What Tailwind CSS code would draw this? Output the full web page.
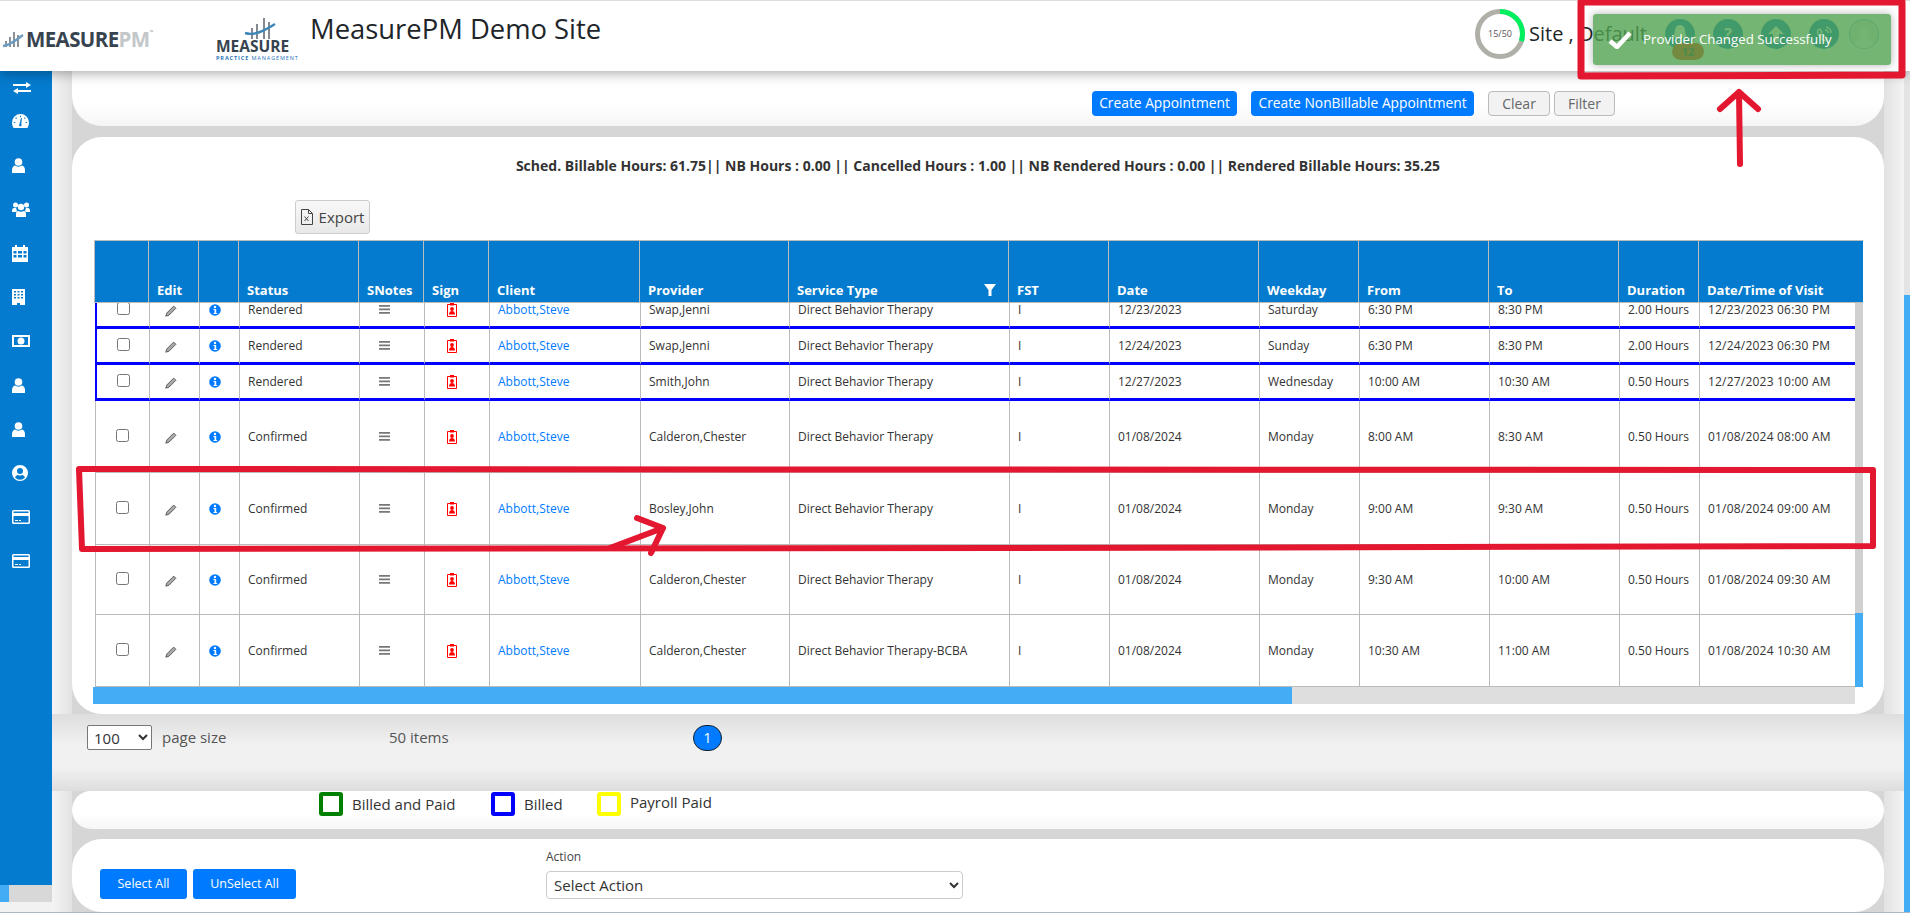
<!DOCTYPE html>
<html lang="en">

<head>
  <meta charset="UTF-8">
  <title>MeasurePM Demo Site</title>
  <script src="https://cdn.jsdelivr.net/npm/@tailwindcss/browser@4"></script>
</head>

<body class="bg-[#f2f2f2] font-['Open_Sans',sans-serif] text-[#333]">
  <div class="relative w-[1910px] h-[913px] overflow-hidden">

    <!-- Top bar -->
    <header class="relative z-10 h-[71px] border-t border-[#ddd] bg-white shadow-[0_2px_12px_rgba(0,0,0,0.35)] flex items-start">
      <div class="flex items-center w-[216px] pl-[3px] pt-[26px]">
        <svg width="21" height="20" viewBox="0 0 21 20" fill="none">
          <path d="M3 12v6M7 8v10M11 3v15M15 6v12" stroke="#59636c" stroke-width="1.4" />
          <path d="M0 17C6 17 13 11 20 6" stroke="#6d9cc0" stroke-width="2.4" />
        </svg>
        <span class="ml-[2px] text-[20.5px] leading-[24px] font-bold tracking-[-0.6px] text-[#37434f]">MEASURE<span class="text-[#c3c7ca]">PM</span><span class="align-top text-[5px] leading-[10px] tracking-normal text-[#999]">™</span></span>
      </div>
      <div class="w-[94px] pt-[17px] flex flex-col">
        <svg class="ml-[28px]" width="32" height="22" viewBox="0 0 32 22" fill="none">
          <path d="M8 10v11M13 6v15M20 0v21M25 4v17" stroke="#59636c" stroke-width="1.5" />
          <path d="M1 15C10 18 20 13 31 6" stroke="#3f86b8" stroke-width="2.4" />
        </svg>
        <span class="text-[15.5px] leading-[13px] font-bold text-[#37434f]">MEASURE</span>
        <span class="mt-[2px] text-[5.5px] leading-[7px] tracking-[0.9px] whitespace-nowrap font-bold text-[#2a75bb]">PRACTICE <span class="font-normal">MANAGEMENT</span></span>
      </div>
      <h1 class="pt-[10px] text-[27.4px] leading-[36px] text-[#212529] whitespace-nowrap">MeasurePM Demo Site</h1>

      <div class="ml-auto mr-[31px] flex items-center pt-[8px]">
        <div class="relative w-[50px] h-[50px]">
          <svg width="50" height="50" viewBox="0 0 50 50" fill="none">
            <circle cx="25" cy="25" r="22.5" stroke="#b0b0a8" stroke-width="5" />
            <circle cx="25" cy="25" r="22.5" stroke="#00f060" stroke-width="5" stroke-dasharray="42.4 141.4" transform="rotate(-90 25 25)" />
          </svg>
          <span class="absolute inset-0 flex items-center justify-center text-[9px] text-[#555]">15/50</span>
        </div>
        <span class="ml-[4px] w-[136px] text-[20px] leading-[28px] text-[#212529] whitespace-nowrap">Site , Default</span>
        <div class="relative w-[30px] h-[30px] rounded-full bg-[#047bce] flex items-center justify-center">
          <svg width="16" height="18" viewBox="0 0 16 18" fill="#fff"><path d="M8 0a5 5 0 0 0-5 5c0 5-2 6-3 8h16c-1-2-3-3-3-8a5 5 0 0 0-5-5zM6 15h4a2 2 0 0 1-4 0z" /></svg>
          <span class="absolute left-[7px] top-[24px] w-[32px] h-[17px] rounded-full bg-[#ff2a00] text-center text-[11px] leading-[17px] font-bold text-[#333]">12</span>
        </div>
        <div class="ml-[18px] w-[30px] h-[30px] rounded-full bg-[#047bce] flex items-center justify-center text-[16px] font-bold text-white">?</div>
        <div class="ml-[18px] w-[30px] h-[30px] rounded-full bg-[#047bce] flex items-center justify-center">
          <svg width="18" height="18" viewBox="0 0 18 18" fill="#fff"><path d="M9 1l8 8h-5v8H6V9H1z" /></svg>
        </div>
        <div class="ml-[18px] w-[30px] h-[30px] rounded-full bg-[#047bce] flex items-center justify-center">
          <svg width="18" height="18" viewBox="0 0 18 18" fill="none" stroke="#fff" stroke-width="1.5"><path d="M3 5c-2 3 3 10 7 11l2-3-3-2-1 1c-1-1-2-2-2-4l1-1-2-3zM10 5a3 3 0 0 1 3 3M11 2a6 6 0 0 1 5 6" /></svg>
        </div>
        <div class="ml-[10px] w-[30px] h-[30px] rounded-full border border-[#047bce]/40 bg-[#e8e8e8] flex items-end justify-center overflow-hidden">
          <svg width="22" height="24" viewBox="0 0 22 24" fill="#fff"><path d="M11 3a5 5 0 0 1 5 6c0 3-2 5-2 6l6 3c2 1 2 3 2 6H0c0-3 0-5 2-6l6-3c0-1-2-3-2-6a5 5 0 0 1 5-6z" /></svg>
        </div>
      </div>
    </header>

    <div class="flex h-[841px]">

      <!-- Side menu -->
      <div class="w-[52px] shrink-0">
        <nav class="h-[814px] bg-[#047bce] pt-[6px]">
          <div class="h-[22px] pl-[13px] flex items-center">
            <svg width="18" height="12" viewBox="0 0 18 12" fill="#fff"><path d="M0 2h13V0l5 3-5 3V4H0zM18 8H5V6l-5 3 5 3v-2h13z" /></svg>
          </div>
          <div class="h-[44px] pl-[12px] flex items-center">
            <svg width="17" height="14" viewBox="0 0 17 14" fill="#fff"><path fill-rule="evenodd" d="M8.500 0A8.500 8.500 0 0 0 0 8.500c0 2 .6 3.800 1.600 5.500h13.800c1-1.700 1.600-3.500 1.600-5.500A8.500 8.500 0 0 0 8.500 0zM8 1.800h1v1.500H8zM4 3.300l1 .8-.8 1-1-.8zM13 3.300l.8 1-1 .8-.8-1zM1.800 8h1.500v1H1.800zM13.700 8h1.500v1h-1.500zM7.500 10l1.500-6 1 .3-.8 5.700a1.300 1.300 0 1 1-1.700 0z" /></svg>
          </div>
          <div class="h-[44px] pl-[12px] flex items-center">
            <svg width="13" height="15" viewBox="0 0 13 15" fill="#fff"><circle cx="6.500" cy="4" r="3.800" /><path d="M0 15v-3c0-3 2-4.500 3-4.500 2 1.500 5 1.500 7 0 1 0 3 1.500 3 4.500v3z" /></svg>
          </div>
          <div class="h-[44px] pl-[12px] flex items-center">
            <svg width="18" height="15" viewBox="0 0 18 15" fill="#fff"><circle cx="3.500" cy="3" r="2.500" /><circle cx="14.500" cy="3" r="2.500" /><circle cx="9" cy="5" r="3.200" /><path d="M0 9c0-2 1-3 2-3h2l1 3-1 1H0zM18 9c0-2-1-3-2-3h-2l-1 3 1 1h4zM4 15v-3c0-2 1-3 2-3 2 1 4 1 6 0 1 0 2 1 2 3v3z" /></svg>
          </div>
          <div class="h-[44px] pl-[12px] flex items-center">
            <svg width="16" height="17" viewBox="0 0 16 17" fill="#fff"><path fill-rule="evenodd" d="M3 0h2v2h6V0h2v2h3v15H0V2h3zM1.500 6v2.500h3V6zm4.500 0v2.500h4V6zm5.500 0v2.500h3V6zm-10 4v2.500h3V10zm4.500 0v2.500h4V10zm5.500 0v2.500h3V10z" /></svg>
          </div>
          <div class="h-[44px] pl-[12px] flex items-center">
            <svg width="13" height="16" viewBox="0 0 13 16" fill="#fff"><path fill-rule="evenodd" d="M0 0h13v16H8v-2H5v2H0zM2 2v1.500h2V2zm3.500 0v1.500h2V2zM9 2v1.500h2V2zM2 5v1.500h2V5zm3.500 0v1.500h2V5zM9 5v1.500h2V5zM2 8v1.500h2V8zm3.500 0v1.500h2V8zM9 8v1.500h2V8z" /></svg>
          </div>
          <div class="h-[44px] pl-[12px] flex items-center">
            <svg width="18" height="12" viewBox="0 0 18 12" fill="#fff"><path fill-rule="evenodd" d="M0 0h18v12H0zm2 2v8h14V2zm7 .5a3.500 3.500 0 1 1 0 7 3.500 3.500 0 0 1 0-7z" /></svg>
          </div>
          <div class="h-[44px] pl-[12px] flex items-center">
            <svg width="13" height="15" viewBox="0 0 13 15" fill="#fff"><circle cx="6.500" cy="4" r="3.800" /><path d="M0 15v-3c0-3 2-4.500 3-4.500 2 1.500 5 1.500 7 0 1 0 3 1.500 3 4.500v3z" /></svg>
          </div>
          <div class="h-[44px] pl-[12px] flex items-center">
            <svg width="13" height="15" viewBox="0 0 13 15" fill="#fff"><circle cx="6.500" cy="4" r="3.800" /><path d="M0 15v-3c0-3 2-4.500 3-4.500 2 1.500 5 1.500 7 0 1 0 3 1.500 3 4.500v3z" /></svg>
          </div>
          <div class="h-[44px] pl-[12px] flex items-center">
            <svg width="16" height="16" viewBox="0 0 16 16" fill="#fff"><path fill-rule="evenodd" d="M8 0a8 8 0 1 1 0 16A8 8 0 0 1 8 0zm0 3a3 3 0 1 0 0 6 3 3 0 0 0 0-6zM3 12.500a6.500 6.500 0 0 0 10 0C12 10.500 10.500 10 10 10c-1.200.8-2.800.8-4 0-.5 0-2 .5-3 2.500z" /></svg>
          </div>
          <div class="h-[44px] pl-[12px] flex items-center">
            <svg width="18" height="14" viewBox="0 0 18 14" fill="#fff"><path fill-rule="evenodd" d="M1.500 0h15A1.500 1.500 0 0 1 18 1.500v11a1.500 1.500 0 0 1-1.500 1.500h-15A1.500 1.500 0 0 1 0 12.500v-11A1.500 1.500 0 0 1 1.500 0zM1.500 1.500V3h15V1.500zm0 4.500v6.500h15V6zM3 10h3v1H3zm4 0h2v1H7z" /></svg>
          </div>
          <div class="h-[44px] pl-[12px] flex items-center">
            <svg width="18" height="14" viewBox="0 0 18 14" fill="#fff"><path fill-rule="evenodd" d="M1.500 0h15A1.500 1.500 0 0 1 18 1.500v11a1.500 1.500 0 0 1-1.500 1.500h-15A1.500 1.500 0 0 1 0 12.500v-11A1.500 1.500 0 0 1 1.500 0zM1.500 1.500V3h15V1.500zm0 4.500v6.500h15V6zM3 10h3v1H3zm4 0h2v1H7z" /></svg>
          </div>
        </nav>
        <div class="flex h-[17px] bg-[#d8d8d8]">
          <div class="w-[9px] bg-[#42adf5]"></div>
        </div>
      </div>

      <!-- Page -->
      <main class="w-[1852px] px-[20px] bg-[linear-gradient(90deg,#f4f4f4_0,#e2e2e2_20px,#e2e2e2_1832px,#f4f4f4_1852px)]">
        <div class="bg-[#d6d6d6]">

          <!-- Buttons -->
          <section class="h-[55px] rounded-b-[30px] bg-[linear-gradient(180deg,#fff_60%,#f5f5f5)] pt-[20px] pr-[269px] flex justify-end">
            <button class="w-[145px] h-[25px] rounded-[4px] bg-[#007bff] text-[13.8px] text-white">Create Appointment</button>
            <button class="ml-[14px] w-[223px] h-[25px] rounded-[4px] bg-[#007bff] text-[13.8px] text-white">Create NonBillable Appointment</button>
            <button class="ml-[14px] w-[62px] h-[25px] rounded-[4px] border border-[#bbb] bg-[#f2f2f2] text-[14px] text-[#666]">Clear</button>
            <button class="ml-[4px] w-[61px] h-[25px] rounded-[4px] border border-[#bbb] bg-[#f2f2f2] text-[14px] text-[#666]">Filter</button>
          </section>

          <!-- Appointment grid -->
          <section class="mt-[11px] h-[577px] rounded-[30px] bg-white pt-[20px] pl-[22px]">
            <p class="-ml-[22px] text-center text-[14px] leading-[18px] font-bold text-[#333]">Sched. Billable Hours: 61.75|| NB Hours : 0.00 || Cancelled Hours : 1.00 || NB Rendered Hours : 0.00 || Rendered Billable Hours: 35.25</p>

            <button class="mt-[25px] ml-[201px] w-[75px] h-[34px] rounded-[3px] border border-[#ccc] bg-[linear-gradient(180deg,#f8f8f8,#e8e8e8)] flex items-center justify-center gap-[6px] text-[15px] text-[#444]">
              <svg width="12" height="16" viewBox="0 0 12 16" fill="none" stroke="#444"><path d="M.5.5h7l4 4v11H.500zM7.500.5v4h4M3.500 7.500l4 4.500M7.500 7.500l-4 4.500" /></svg>
              Export
            </button>

            <table class="mt-[6px] w-[1769px] table-fixed border-separate border-spacing-0">
              <colgroup>
                <col class="w-[54px]"><col class="w-[50px]"><col class="w-[40px]"><col class="w-[120px]">
                <col class="w-[65px]"><col class="w-[65px]"><col class="w-[151px]"><col class="w-[149px]">
                <col class="w-[220px]"><col class="w-[100px]"><col class="w-[150px]"><col class="w-[100px]">
                <col class="w-[130px]"><col class="w-[130px]"><col class="w-[80px]"><col class="w-[165px]">
              </colgroup>
              <thead>
                <tr id="cabecera" class="h-[63px]"></tr>
              </thead>
            </table>

            <div class="flex w-[1769px]">
              <div class="w-[1761px] h-[384px] overflow-hidden">
                <table class="-mt-[10px] ml-px w-[1760px] table-fixed border-separate border-spacing-0">
                  <colgroup>
                    <col class="w-[54px]"><col class="w-[50px]"><col class="w-[40px]"><col class="w-[120px]">
                    <col class="w-[65px]"><col class="w-[65px]"><col class="w-[151px]"><col class="w-[149px]">
                    <col class="w-[220px]"><col class="w-[100px]"><col class="w-[150px]"><col class="w-[100px]">
                    <col class="w-[130px]"><col class="w-[130px]"><col class="w-[80px]"><col class="w-[156px]">
                  </colgroup>
                  <tbody id="filas"></tbody>
                </table>
              </div>
              <div class="w-[8px] h-[384px] flex flex-col bg-[#d0d0d0]">
                <div class="mt-auto h-[74px] bg-[#42adf5]"></div>
              </div>
            </div>
            <div class="-ml-px w-[1762px] h-[17px] bg-[#dedede]">
              <div class="w-[1199px] h-full bg-[#42adf5]"></div>
            </div>
          </section>
        </div>

        <!-- Pager -->
        <div class="-mx-[20px] px-[35px] h-[77px] pt-[11px] bg-[linear-gradient(180deg,#dedede,#f1f1f1_40%,#f1f1f1_70%,#dddddd)] flex items-start text-[15px] text-[#555]">
          <select class="w-[65px] h-[25px] rounded-[2px] border border-[#777] bg-white pl-[2px] text-[15px] text-[#333]">
            <option>100</option>
          </select>
          <span class="ml-[10px] w-[227px] leading-[25px]">page size</span>
          <span class="w-[304px] leading-[24px]">50 items</span>
          <span class="w-[29px] h-[26px] rounded-full border border-[#123] bg-[#007bff] text-center text-[14px] leading-[24px] text-white">1</span>
        </div>

        <div class="bg-[#d6d6d6]">
          <!-- Legend -->
          <section class="h-[38px] rounded-[19px] bg-[linear-gradient(180deg,#fff_60%,#f6f6f6)] pl-[247px] pt-[1px] flex text-[15px] text-[#333]">
            <div class="w-[172px] flex items-center h-[24px]">
              <span class="w-[24px] h-[24px] rounded-[3px] border-4 border-[#008000]"></span>
              <span class="ml-[9px]">Billed and Paid</span>
            </div>
            <div class="w-[106px] flex items-center h-[24px]">
              <span class="w-[24px] h-[24px] rounded-[3px] border-4 border-[#0000ff]"></span>
              <span class="ml-[9px]">Billed</span>
            </div>
            <div class="flex items-center h-[24px]">
              <span class="w-[24px] h-[24px] rounded-[3px] border-4 border-[#ffff00]"></span>
              <span class="ml-[9px] -mt-[4px]">Payroll Paid</span>
            </div>
          </section>

          <!-- Actions -->
          <section class="mt-[10px] h-[73px] rounded-[30px] bg-white pl-[28px] flex items-start">
            <button class="mt-[30px] w-[87px] h-[30px] rounded-[3px] bg-[#007bff] text-[12.5px] text-white">Select All</button>
            <button class="mt-[30px] ml-[6px] w-[103px] h-[30px] rounded-[3px] bg-[#007bff] text-[12.5px] text-white">UnSelect All</button>
            <div class="ml-[250px] mt-[10px] flex flex-col">
              <label class="text-[12px] leading-[16px] text-[#444]">Action</label>
              <select class="mt-[6px] w-[417px] h-[28px] rounded-[4px] border border-[#ccc] bg-white pl-[3px] text-[15px] text-[#333]">
                <option>Select Action</option>
              </select>
            </div>
          </section>
        </div>
      </main>

      <!-- Page scrollbar -->
      <div class="w-[6px] flex flex-col bg-[#e4e4e4]">
        <div class="mt-[224px] flex-1 bg-[#42adf5]"></div>
      </div>
    </div>

    <div class="absolute left-0 bottom-0 w-full h-px bg-[#aeb8c4]"></div>

    <!-- Toast -->
    <div class="absolute z-20 left-[1593px] top-[14px] w-[298px] h-[51px] rounded-[3px] bg-[#51a351]/80 shadow-[0_0_8px_rgba(0,0,0,0.3)] flex items-center pl-[15px] text-[13.3px] text-white">
      <svg width="24" height="18" viewBox="0 0 24 18" fill="none" stroke="#fff" stroke-width="4.500"><path d="M2 10l7 6L22 2" /></svg>
      <span class="ml-[11px]">Provider Changed Successfully</span>
    </div>

    <!-- Red marks drawn over the screenshot -->
    <svg class="absolute z-30 inset-0 pointer-events-none" width="1910" height="913" viewBox="0 0 1910 913" fill="none" stroke="#e3172f" stroke-linecap="round" stroke-linejoin="round">
      <path d="M1581 2L1581 76L1902 75L1902 2Z" stroke-width="7" />
      <path d="M1740 164L1739 92M1720 109L1739 92L1758 109" stroke-width="6" />
      <path d="M79 469L82 549L1000 548L1873 546L1873 470Z" stroke-width="6" />
      <path d="M610 548L663 528M637 518L663 528L651 553" stroke-width="6" />
    </svg>
  </div>

  <script>
    // Cabecera de la grilla
    const thBase = 'border-t border-b border-l border-[#bbb] bg-[#047bce] px-2 pb-[3px] align-bottom text-left text-[13px] leading-[18px] font-bold text-white whitespace-nowrap';
    const columnas = ['', 'Edit', '', 'Status', 'SNotes', 'Sign', 'Client', 'Provider', 'Service Type', 'FST', 'Date', 'Weekday', 'From', 'To', 'Duration', 'Date/Time of Visit'];
    const embudo = '<svg class="inline-block float-right mr-[4px] mt-[3px]" width="12" height="12" viewBox="0 0 12 12" fill="#fff"><path d="M0 0h12L7.500 6v6h-3V6z"/></svg>';
    document.getElementById('cabecera').innerHTML = columnas
      .map(c => `<th class="${thBase}">${c}${c === 'Service Type' ? embudo : ''}</th>`)
      .join('');

    // Filas visibles
    const filas = [
      ['Rendered', 'Swap,Jenni', 'Direct Behavior Therapy', '12/23/2023', 'Saturday', '6:30 PM', '8:30 PM', '2.00 Hours', '12/23/2023 06:30 PM', 'h-[36px]', true],
      ['Rendered', 'Swap,Jenni', 'Direct Behavior Therapy', '12/24/2023', 'Sunday', '6:30 PM', '8:30 PM', '2.00 Hours', '12/24/2023 06:30 PM', 'h-[36px]', true],
      ['Rendered', 'Smith,John', 'Direct Behavior Therapy', '12/27/2023', 'Wednesday', '10:00 AM', '10:30 AM', '0.50 Hours', '12/27/2023 10:00 AM', 'h-[36px]', true],
      ['Confirmed', 'Calderon,Chester', 'Direct Behavior Therapy', '01/08/2024', 'Monday', '8:00 AM', '8:30 AM', '0.50 Hours', '01/08/2024 08:00 AM', 'h-[72px]', false],
      ['Confirmed', 'Bosley,John', 'Direct Behavior Therapy', '01/08/2024', 'Monday', '9:00 AM', '9:30 AM', '0.50 Hours', '01/08/2024 09:00 AM', 'h-[72px]', false],
      ['Confirmed', 'Calderon,Chester', 'Direct Behavior Therapy', '01/08/2024', 'Monday', '9:30 AM', '10:00 AM', '0.50 Hours', '01/08/2024 09:30 AM', 'h-[70px]', false],
      ['Confirmed', 'Calderon,Chester', 'Direct Behavior Therapy-BCBA', '01/08/2024', 'Monday', '10:30 AM', '11:00 AM', '0.50 Hours', '01/08/2024 10:30 AM', 'h-[72px]', false]
    ];

    const lapiz = '<svg class="-mb-[3px]" width="12" height="12" viewBox="0 0 12 12" fill="#aaa" stroke="#444" stroke-width=".8"><path d="M.8 11.200L1.800 8 8.700 1.100 10.900 3.300 4 10.200z"/></svg>';
    const info = '<svg width="12" height="12" viewBox="0 0 12 12"><circle cx="6" cy="6" r="5.800" fill="#007bff"/><circle cx="6" cy="3" r="1.200" fill="#fff"/><path d="M4.500 5h2.700v4h1v1H4.500V9h1V6h-1z" fill="#fff"/></svg>';
    const notas = '<svg width="11" height="9" viewBox="0 0 11 9" fill="#777"><path d="M0 0h11v1.800H0zM0 3.500h11v1.800H0zM0 7h11v1.800H0z"/></svg>';
    const firma = '<svg width="10" height="14" viewBox="0 0 10 14"><path d="M.5 1.500h9v12h-9z" fill="#fff" stroke="#f00"/><path d="M3 0h4v2.500H3zM2 11.500c0-2.500 1.500-3.500 3-3.500s3 1 3 3.500z" fill="#f00"/><circle cx="5" cy="6" r="1.900" fill="#f00"/></svg>';

    document.getElementById('filas').innerHTML = filas.map(f => {
      const azul = f[10];
      const borde = azul ? 'border-b-[3px] border-b-[#0000ff]' : 'border-b border-b-[#bbb]';
      const celda = `border-l border-l-[#bbb] ${borde} px-2 py-0 align-middle text-[12px] leading-[16px] text-[#333] whitespace-nowrap overflow-hidden`;
      const primera = azul ? `border-l-2 border-l-[#0000ff] ${borde} text-center align-middle` : `border-l border-l-[#bbb] ${borde} text-center align-middle`;
      return `<tr class="${f[9]}">
        <td class="${primera}"><input type="checkbox" class="block mx-auto -mt-[3px] w-[13px] h-[13px]"></td>
        <td class="${celda} pl-[15px]">${lapiz}</td>
        <td class="${celda} pl-[9px]">${info}</td>
        <td class="${celda}">${f[0]}</td>
        <td class="${celda} pl-[19px]">${notas}</td>
        <td class="${celda} pl-[22px]">${firma}</td>
        <td class="${celda}"><a class="text-[#007bff]">Abbott,Steve</a></td>
        <td class="${celda}">${f[1]}</td>
        <td class="${celda}">${f[2]}</td>
        <td class="${celda}">I</td>
        <td class="${celda}">${f[3]}</td>
        <td class="${celda}">${f[4]}</td>
        <td class="${celda}">${f[5]}</td>
        <td class="${celda}">${f[6]}</td>
        <td class="${celda}">${f[7]}</td>
        <td class="${celda} tracking-[0.2px]">${f[8]}</td>
      </tr>`;
    }).join('');
  </script>
</body>

</html>
